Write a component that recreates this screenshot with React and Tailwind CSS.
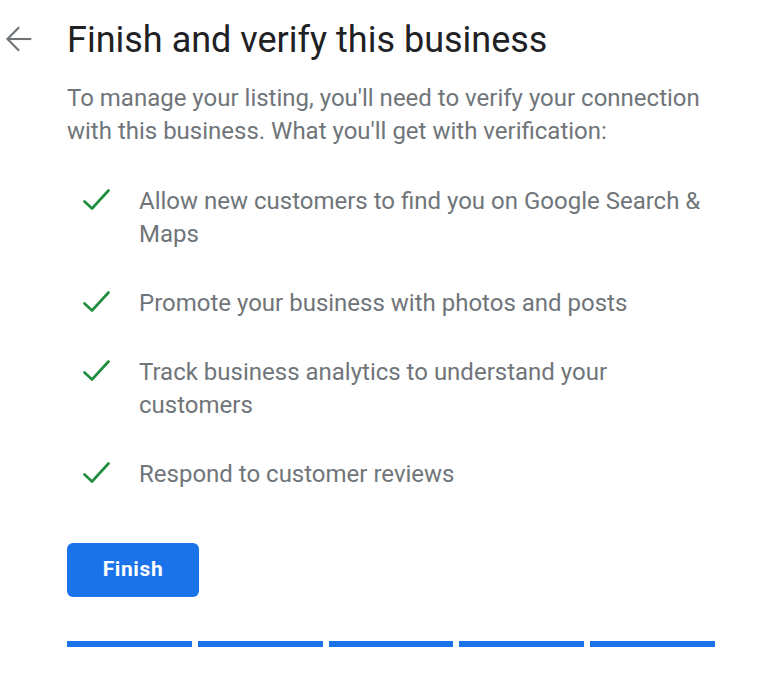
import React from "react";

const items = [
  "Allow new customers to find you on Google Search & Maps",
  "Promote your business with photos and posts",
  "Track business analytics to understand your customers",
  "Respond to customer reviews",
];

const BackArrow = () => (
  <svg viewBox="0 0 24 24" className="w-[36px] h-[36px]" fill="none" stroke="#6f7276" strokeWidth="1.4" strokeLinecap="square">
    <path d="M19.5 12H4.8" />
    <path d="M11.6 4.6L4.3 12l7.3 7.4" />
  </svg>
);

const Check = () => (
  <svg viewBox="0 0 28 23" className="w-[28px] h-[23px]" fill="none" stroke="#1e8e3e" strokeWidth="2.6" strokeLinecap="round" strokeLinejoin="round">
    <path d="M2.5 13.5L10 20.5L26.5 2.5" />
  </svg>
);

export default function App() {
  return (
    <div className="min-h-screen bg-white font-['Roboto',sans-serif]">
      <div className="flex pt-[18px]">
        <div className="w-[67px] pl-[1px] pt-[3px]">
          <BackArrow />
        </div>
        <div className="w-[648px]">
          <h1 className="text-[36px] leading-[44px] text-[#202124]">
            Finish and verify this business
          </h1>

          <p className="mt-[20px] text-[24px] leading-[33px] text-[#70757a]">
            To manage your listing, you'll need to verify your connection with this business. What you'll get with verification:
          </p>

          <ul className="mt-[37px] flex flex-col gap-[36px]">
            {items.map((item) => (
              <li key={item} className="flex">
                <div className="w-[72px] pl-[15px] pt-[3px]">
                  <Check />
                </div>
                <span className="flex-1 text-[24px] leading-[33px] text-[#70757a]">
                  {item}
                </span>
              </li>
            ))}
          </ul>

          <button className="mt-[52px] w-[132px] h-[54px] rounded-[6px] bg-[#1a73e8] text-white text-[21px] font-bold tracking-[0.6px]">
            Finish
          </button>

          <div className="mt-[44px] flex gap-[6px]">
            <div className="flex-1 h-[6px] bg-[#1a73e8]" />
            <div className="flex-1 h-[6px] bg-[#1a73e8]" />
            <div className="flex-1 h-[6px] bg-[#1a73e8]" />
            <div className="flex-1 h-[6px] bg-[#1a73e8]" />
            <div className="flex-1 h-[6px] bg-[#1a73e8]" />
          </div>
        </div>
      </div>
    </div>
  );
}
